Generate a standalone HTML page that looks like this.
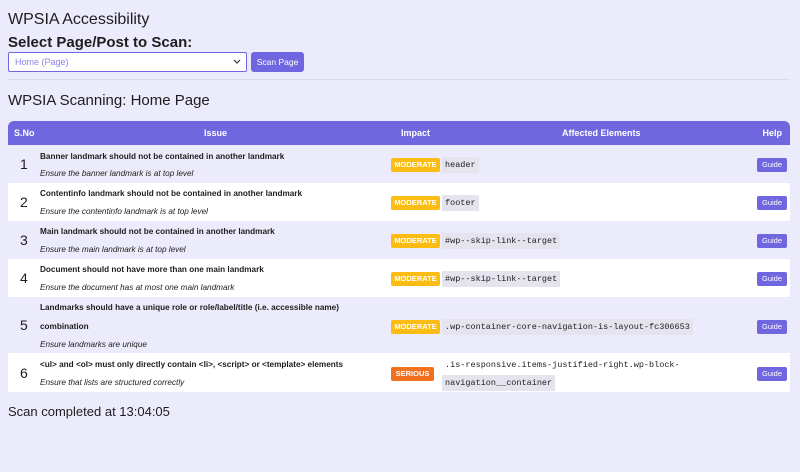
<!DOCTYPE html>
<html><head><style>
body{margin:0;width:800px;height:472px;background:#ecebfb;font-family:"Liberation Sans",sans-serif;color:#1d1d1d;position:relative;overflow:hidden}
.a{position:absolute}
.t1{left:8px;top:11px;font-size:16px}
.t2{left:8px;top:34px;font-size:15px;font-weight:bold}
.sel{left:8px;top:52px;height:18px;border:1px solid #7066e0;background:#fff;border-radius:2px;font-size:9px;color:#8a83e8;line-height:18px;padding-left:6px;box-sizing:content-box;width:231px}
.btn{left:251px;top:52px;width:53px;height:20px;background:#7066e0;border-radius:3px;color:#fff;font-size:8.5px;line-height:20px;text-align:center}
.hr{left:8px;top:79px;width:782px;height:1px;background:#dcdbe8}
.t3{left:8px;top:92px;font-size:15px}
.hd{left:8px;top:121px;width:782px;height:24px;background:#7066e0;border-radius:6px 6px 0 0;color:#fff;font-size:9px;font-weight:bold}
.hd span{position:absolute;top:7px}
.row{left:8px;width:782px}
.w{background:#fff}
.n{position:absolute;left:12px;font-size:14px}
.is{position:absolute;left:32px;font-size:8.2px;font-weight:bold}
.d{position:absolute;left:32px;font-size:8.2px;font-style:italic}
.bg{position:absolute;left:383px;height:14px;line-height:14px;font-size:7.5px;font-weight:bold;color:#fff;border-radius:2px;text-align:center;width:49px;background:#fbbc14}
.s{background:#f1701f;width:43px}
.c{position:absolute;left:434px;font-family:"Liberation Mono",monospace;font-size:8.5px;background:#e4e3ee;padding:2px 3px;line-height:12px}
.g{position:absolute;left:749px;width:30px;height:14px;background:#7066e0;color:#fff;font-size:7.5px;line-height:14px;text-align:center;border-radius:2px}
.ft{left:8px;top:404px;font-size:13px}
</style></head><body>
<div class="a t1">WPSIA Accessibility</div>
<div class="a t2">Select Page/Post to Scan:</div>
<div class="a sel">Home (Page)<svg style="position:absolute;right:5px;top:6px" width="8" height="6"><path d="M1 1 L4 4 L7 1" stroke="#333" fill="none" stroke-width="1.2"/></svg></div>
<div class="a btn">Scan Page</div>
<div class="a hr"></div>
<div class="a t3">WPSIA Scanning: Home Page</div>
<div class="a hd"><span style="left:6px">S.No</span><span style="left:196px">Issue</span><span style="left:393px">Impact</span><span style="left:554px">Affected Elements</span><span style="right:8px">Help</span></div>

<div class="a row" style="top:145px;height:38px">
<div class="n" style="top:11px">1</div><div class="is" style="top:7px">Banner landmark should not be contained in another landmark</div><div class="d" style="top:24px">Ensure the banner landmark is at top level</div>
<div class="bg" style="top:13px">MODERATE</div><div class="c" style="top:12px">header</div><div class="g" style="top:13px">Guide</div></div>

<div class="a row w" style="top:183px;height:38px">
<div class="n" style="top:11px">2</div><div class="is" style="top:6px">Contentinfo landmark should not be contained in another landmark</div><div class="d" style="top:24px">Ensure the contentinfo landmark is at top level</div>
<div class="bg" style="top:13px">MODERATE</div><div class="c" style="top:12px">footer</div><div class="g" style="top:13px">Guide</div></div>

<div class="a row" style="top:221px;height:38px">
<div class="n" style="top:11px">3</div><div class="is" style="top:6px">Main landmark should not be contained in another landmark</div><div class="d" style="top:24px">Ensure the main landmark is at top level</div>
<div class="bg" style="top:13px">MODERATE</div><div class="c" style="top:12px">#wp--skip-link--target</div><div class="g" style="top:13px">Guide</div></div>

<div class="a row w" style="top:259px;height:38px">
<div class="n" style="top:11px">4</div><div class="is" style="top:6px">Document should not have more than one main landmark</div><div class="d" style="top:24px">Ensure the document has at most one main landmark</div>
<div class="bg" style="top:13px">MODERATE</div><div class="c" style="top:12px">#wp--skip-link--target</div><div class="g" style="top:13px">Guide</div></div>

<div class="a row" style="top:297px;height:56px">
<div class="n" style="top:20px">5</div><div class="is" style="top:6px">Landmarks should have a unique role or role/label/title (i.e. accessible name)</div><div class="is" style="top:25px">combination</div><div class="d" style="top:43px">Ensure landmarks are unique</div>
<div class="bg" style="top:23px">MODERATE</div><div class="c" style="top:22px">.wp-container-core-navigation-is-layout-fc306653</div><div class="g" style="top:23px">Guide</div></div>

<div class="a row w" style="top:353px;height:39px">
<div class="n" style="top:12px">6</div><div class="is" style="top:7px">&lt;ul&gt; and &lt;ol&gt; must only directly contain &lt;li&gt;, &lt;script&gt; or &lt;template&gt; elements</div><div class="d" style="top:25px">Ensure that lists are structured correctly</div>
<div class="bg s" style="top:14px">SERIOUS</div><div class="c" style="top:4px;background:transparent">.is-responsive.items-justified-right.wp-block-</div><div class="c" style="top:22px">navigation__container</div><div class="g" style="top:14px">Guide</div></div>

<div class="a ft">Scan completed at 13:04:05</div>
</body></html>
